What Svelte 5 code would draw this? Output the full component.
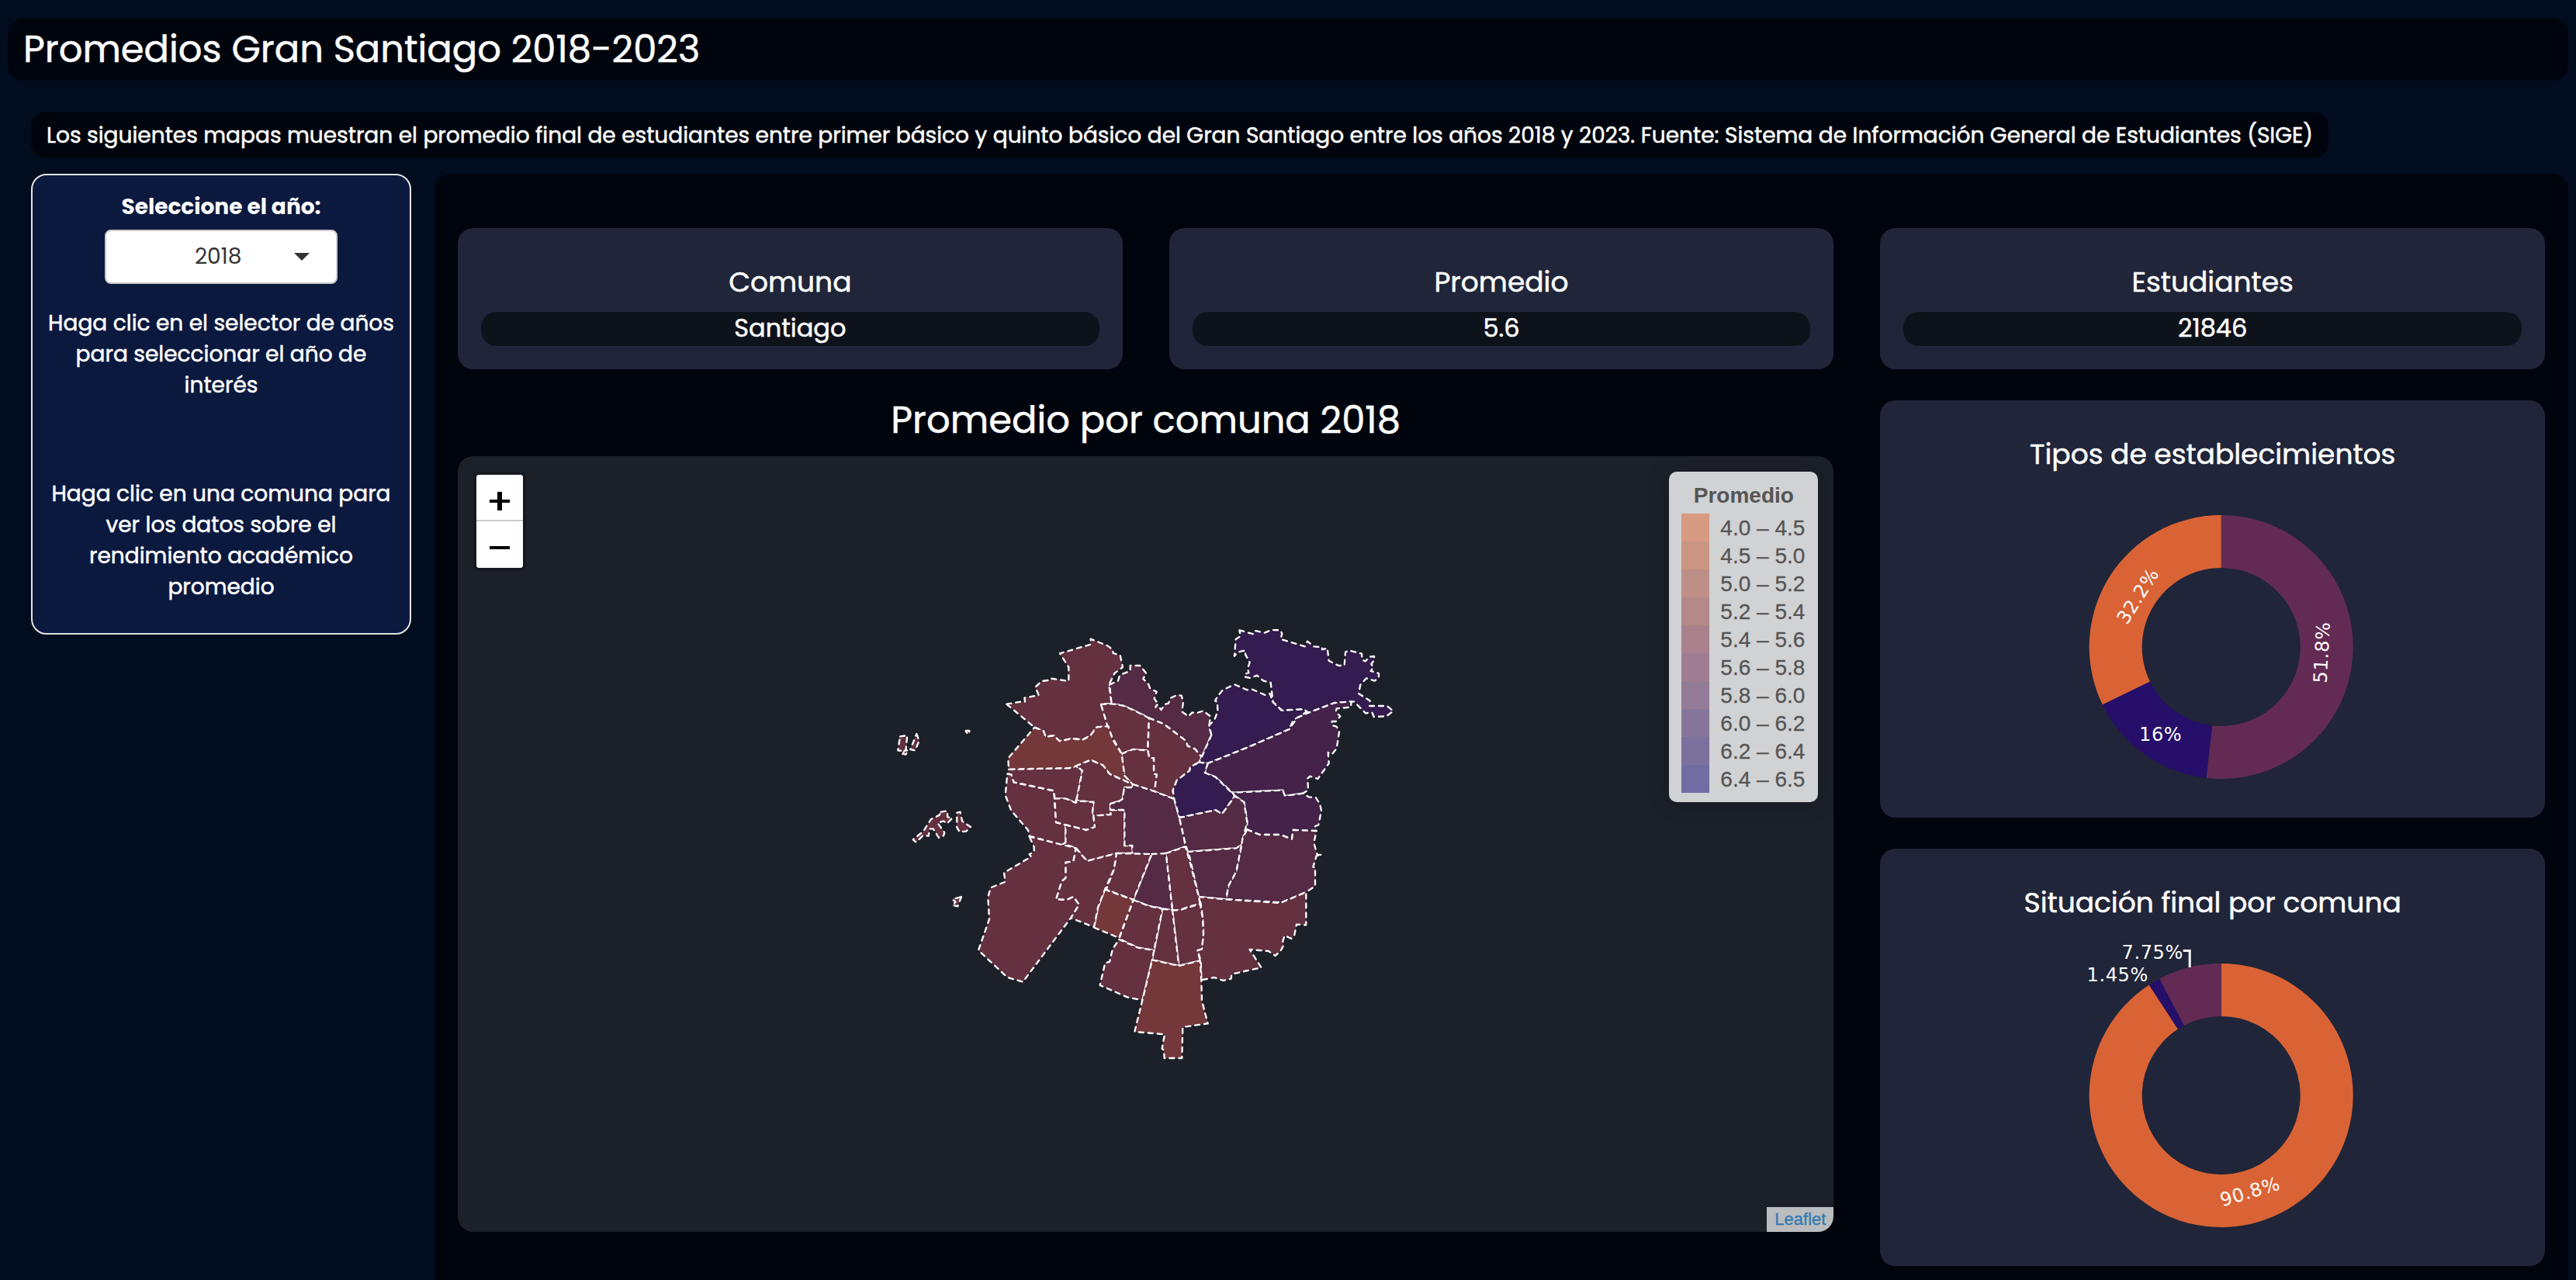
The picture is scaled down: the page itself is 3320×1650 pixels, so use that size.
<script>
  const A = '#65303f', B = '#74383b', C = '#552a45', D = '#44224a', E = '#341b50';

  // Each commune: fill, horizontal shift, vertical shift, outline points
  const communes = [
    [A, 0, 0, '472,383 525,374 543,374 541,359 596,348 583,317 608,294 640,290 644,284 712,294 712,240 678,187 797,152 797,131 862,157 882,172 884,186 911,194 921,240 889,264 868,308 878,381 837,383 862,463 862,470 820,472 795,506 765,521 725,516 677,526 655,505 622,509 615,487 580,473'],
    [C, 780, 0, '90,308 123,292 130,270 170,255 170,234 208,234 232,264 220,285 240,305 247,323 272,335 263,362 275,378 268,395 275,385 290,405 303,384 318,380 325,360 350,348 368,350 375,375 370,412 395,430 410,415 425,418 452,409 480,430 475,470 484,502 446,588 420,556 392,545 385,525 300,460 243,437 180,405 140,388 98,382'],
    [A, 780, 0, '57,384 98,382 140,388 180,405 243,437 240,500 238,562 180,558 137,575 97,505 80,460'],
    [A, 780, 0, '243,437 300,460 385,525 392,545 420,556 446,588 436,608 402,626 400,640 350,678 335,717 340,750 262,720 272,655 261,653 261,592 243,590 238,562'],
    [A, 780, 0, '137,575 180,558 238,562 243,590 261,592 261,653 272,655 264,720 180,694 147,660 137,600'],
    [A, 0, 0, '475,653 490,655 500,685 655,718 663,840 700,850 700,918 675,935 675,925 560,893 555,870 490,795 467,735'],
    [A, 0, 0, '480,635 715,630 740,622 765,640 740,765 700,748 658,748 655,718 500,685 490,655 478,653'],
    [B, 0, 0, '580,473 615,487 622,509 655,505 677,526 725,516 765,521 795,506 820,472 865,468 882,520 917,575 928,660 960,694 870,653 845,620 797,599 745,622 715,630 480,635 478,592'],
    [A, 0, 0, '740,622 797,599 845,620 870,653 960,694 958,706 928,705 920,750 905,758 873,768 873,810 808,815 803,810 808,762 740,755 740,765 765,640'],
    [A, 0, 0, '658,748 700,748 740,765 745,757 808,762 803,810 808,815 813,858 780,870 663,840'],
    [A, 0, 0, '700,850 780,870 813,858 808,815 875,810 873,792 928,792 928,930 958,930 958,960 897,960 783,990 740,940 700,925'],
    [C, 780, 0, '183,694 262,720 340,750 360,822 380,910 382,934 308,960 290,965 184,962 184,972 140,970 140,960 178,960 178,930 148,930 148,792 93,792 93,768 125,760 140,750 147,705 178,705'],
    [E, 780, 0, '484,502 475,465 495,445 508,412 507,375 498,370 510,350 528,328 573,307 622,328 640,325 692,348 710,342 722,375 755,407 838,402 852,412 835,425 800,445 785,480 625,550 470,612 436,608 446,588'],
    [E, 780, 0, '592,97 645,112 652,99 690,107 715,96 750,97 757,110 752,132 845,160 855,140 880,160 912,163 912,172 932,166 938,215 975,234 998,234 1002,182 1015,175 1065,188 1067,213 1080,217 1093,200 1113,198 1113,213 1102,228 1110,240 1100,255 1131,264 1131,280 1115,293 1083,283 1060,308 1053,342 1097,370 1095,390 1163,390 1187,410 1160,430 1112,432 1105,415 1080,418 1035,373 960,378 860,416 840,402 757,407 722,375 713,300 685,293 660,272 635,282 615,278 613,266 628,262 624,245 632,222 615,190 615,175 585,182 573,197 578,132 597,120'],
    [D, 780, 0, '470,612 625,550 785,480 815,436 860,416 960,378 1025,373 1023,395 968,400 965,412 982,430 965,450 950,450 950,465 968,470 978,490 968,555 950,577 935,570 938,612 895,672 865,662 856,670 858,715 838,728 768,738 760,716 565,725 500,665 458,648'],
    [E, 780, 0, '436,608 470,612 458,648 500,665 575,738 525,808 500,793 360,822 340,750 335,717 350,678 400,640 402,626'],
    [D, 780, 0, '575,738 565,725 760,716 768,738 838,728 860,742 888,745 903,768 909,795 898,850 885,855 890,873 800,870 795,905 750,888 670,888 622,868 622,835 610,762'],
    [C, 780, 0, '360,822 500,793 525,808 575,738 610,762 622,840 605,905 600,928 580,940 392,954 380,910'],
    [C, 780, 0, '622,868 670,888 750,888 795,905 800,870 890,873 880,920 893,965 910,966 890,970 877,1013 885,1014 885,1087 850,1110 755,1150 540,1138 550,1085 580,1030 600,930 605,900'],
    [C, 780, 0, '392,954 580,940 600,928 580,1030 550,1085 540,1138 435,1128 400,975'],
    [A, 780, 810, '435,318 540,328 750,342 850,300 850,427 813,425 805,465 793,480 767,468 760,490 763,505 750,530 730,546 705,528 632,522 677,592 562,617 560,635 530,642 495,630 445,640 443,565 430,525 447,520 453,460 450,400 443,345'],
    [A, 780, 810, '308,150 383,124 400,180 435,318 440,345 400,355 360,370 333,370'],
    [C, 780, 810, '253,153 308,150 333,370 240,353 182,330'],
    [A, 780, 810, '117,150 253,153 182,330 77,290 107,212'],
    [A, 780, 810, '333,370 360,370 440,345 450,400 453,460 447,520 430,525 440,565 358,585'],
    [A, 780, 810, '295,365 333,370 358,585 255,562 262,525'],
    [A, 780, 810, '182,330 240,353 295,365 262,525 200,515 127,480'],
    [B, 780, 810, '72,290 182,330 127,477 30,437 45,360'],
    [A, 780, 810, '127,483 200,515 262,525 255,562 217,718 160,707 53,660 73,573 90,570 102,520'],
    [B, 780, 810, '255,562 358,585 440,565 445,640 447,720 470,808 373,822 370,942 302,942 300,912 293,905 303,850 187,840 217,718'],
    [A, 270, 810, '470,130 513,180 627,150 617,212 582,290 555,360 540,435 450,400 482,348 460,318 435,330 393,328 415,258 430,245 430,185 460,180'],
    [A, 270, 810, '290,85 410,115 470,130 460,180 430,185 430,245 415,258 393,328 435,330 460,318 482,348 450,400 265,647 205,630 93,525 135,405 130,320 140,283 197,260 192,225 297,163 290,153 308,145 308,125'],
    [A, 0, 0, '60,508 88,504 82,565 52,562'],
    [A, 0, 0, '124,498 134,525 118,562 100,558'],
    [A, 0, 0, '70,575 82,578 92,562 78,562'],
    [A, 0, 0, '314,486 328,486 328,498 318,494'],
    [A, 0, 0, '218,800 242,796 244,820 262,823 242,845 228,835 205,842 232,880 228,892 210,900 188,865 175,865 170,893 150,890 122,917 110,907 150,875 180,828 212,812'],
    [A, 0, 0, '280,803 293,800 300,835 333,858 315,875 290,877 280,860'],
    [A, 270, 810, '27,318 13,355 -8,350 5,338 -8,328']
  ];

  const legend = [
    ['#d79a82', '4.0 – 4.5'], ['#ca9683', '4.5 – 5.0'], ['#be8f87', '5.0 – 5.2'], ['#b48988', '5.2 – 5.4'],
    ['#a9828c', '5.4 – 5.6'], ['#9f7e93', '5.6 – 5.8'], ['#937a97', '5.8 – 6.0'], ['#87769b', '6.0 – 6.2'],
    ['#7c709e', '6.2 – 6.4'], ['#716ca2', '6.4 – 6.5']
  ];

  const stats = [['Comuna', 'Santiago'], ['Promedio', '5.6'], ['Estudiantes', '21846']];

  // Donut slice between two fractions of a turn, clockwise from the top
  function ring(from, to, r = 170, inner = 102) {
    const p = (t, q) => `${(q * Math.sin(t * 2 * Math.PI)).toFixed(2)} ${(-q * Math.cos(t * 2 * Math.PI)).toFixed(2)}`;
    const big = to - from > 0.5 ? 1 : 0;
    return `M${p(from, r)}A${r} ${r} 0 ${big} 1 ${p(to, r)}L${p(to, inner)}A${inner} ${inner} 0 ${big} 0 ${p(from, inner)}Z`;
  }
</script>

<div class="page">
  <header><h1>Promedios Gran Santiago 2018-2023</h1></header>
  <p class="intro">Los siguientes mapas muestran el promedio final de estudiantes entre primer básico y quinto básico del Gran Santiago entre los años 2018 y 2023. Fuente: Sistema de Información General de Estudiantes (SIGE)</p>

  <div class="body">
    <aside>
      <span class="label">Seleccione el año:</span>
      <div class="select">
        <span>2018</span>
        <svg class="caret" width="20" height="10" viewBox="0 0 20 10"><path d="M0 0H20L10 10Z" fill="#333" /></svg>
      </div>
      <p>Haga clic en el selector de años<br />para seleccionar el año de<br />interés</p>
      <p class="second">Haga clic en una comuna para<br />ver los datos sobre el<br />rendimiento académico<br />promedio</p>
    </aside>

    <main>
      {#each stats as [name, value]}
        <section class="stat">
          <h4>{name}</h4>
          <div class="value">{value}</div>
        </section>
      {/each}

      <section class="mapcol">
        <h2>Promedio por comuna 2018</h2>
        <div class="map">
          <svg class="shapes" viewBox="-1650 -576 5320 3000">
            {#each communes as [fill, dx, dy, points]}
              <polygon {fill} {points} transform="translate({dx} {dy})" />
            {/each}
          </svg>
          <div class="zoom">
            <button aria-label="Acercar"><svg width="26" height="24" viewBox="0 0 26 24"><path d="M0 10H26V14H0ZM10 0H16V24H10Z" /></svg></button>
            <button aria-label="Alejar"><svg width="26" height="24" viewBox="0 0 26 24"><path d="M0 10H26V14H0Z" /></svg></button>
          </div>
          <div class="legend">
            <strong>Promedio</strong>
            {#each legend as [color, range]}
              <div class="row"><i style="background:{color}"></i><span>{range}</span></div>
            {/each}
          </div>
          <div class="credit">Leaflet</div>
        </div>
      </section>

      <div class="charts">
        <section class="chart">
          <h4>Tipos de establecimientos</h4>
          <svg viewBox="2423.33 626 856.67 428">
            <g transform="translate(2863 834)">
              <path d={ring(0, 0.518)} fill="#632b53" />
              <path d={ring(0.518, 0.678)} fill="#260f6a" />
              <path d={ring(0.678, 1)} fill="#da6335" />
            </g>
            <text transform="translate(2992 841) rotate(-86.8)" y="9">51.8%</text>
            <text x="2785" y="955">16%</text>
            <text transform="translate(2755 768) rotate(-58)" y="9">32.2%</text>
          </svg>
        </section>
        <section class="chart">
          <h4>Situación final por comuna</h4>
          <svg viewBox="2423.33 1204 856.67 428">
            <g transform="translate(2863 1412)">
              <path d={ring(0, 0.908)} fill="#da6335" />
              <path d={ring(0.908, 0.9225)} fill="#260f6a" />
              <path d={ring(0.9225, 1)} fill="#632b53" />
            </g>
            <path class="leader" d="M2814 1225.5H2822.5V1247" />
            <text x="2774.5" y="1236">7.75%</text>
            <text x="2729.5" y="1265">1.45%</text>
            <text transform="translate(2900 1535.5) rotate(-16.6)" y="9">90.8%</text>
          </svg>
        </section>
      </div>
    </main>
  </div>
</div>

<style>
  :global(body) { background: #010c1f; overflow: hidden; }
  .page {
    box-sizing: border-box;
    height: 1650px;
    overflow: hidden;
    padding: 24px 10px 0;
    background: #010c1f;
    color: #fff;
    font-family: Poppins, Inter, sans-serif;
    font-size: 28px;
    line-height: 40px;
    -webkit-text-stroke: 0.5px currentColor;
    display: flex;
    flex-direction: column;
  }
  h1, h2, h4, p { margin: 0; font-weight: 400; }
  header { flex: none; height: 80px; border-radius: 20px; background: #00050d; padding-left: 20px; }
  h1, h2 { font-size: 48px; line-height: 80px; }
  h1 { white-space: nowrap; }
  .intro {
    flex: none;
    align-self: flex-start;
    box-sizing: border-box;
    width: 2961px;
    height: 60px;
    margin: 40px 0 20px 30px;
    padding: 11px 20px 9px;
    border-radius: 20px;
    background: #00050d;
    white-space: nowrap;
  }
  .body { flex: none; display: flex; align-items: flex-start; padding-left: 30px; gap: 30px; }
  aside {
    box-sizing: border-box;
    flex: none;
    width: 490px;
    height: 594px;
    border: 2px solid #e3e3e3;
    border-radius: 20px;
    background: #0b193f;
    padding-top: 21px;
    text-align: center;
    display: flex;
    flex-direction: column;
    align-items: center;
    white-space: nowrap;
  }
  .label { font-weight: 700; -webkit-text-stroke: 0; }
  .select {
    box-sizing: border-box;
    width: 300px;
    height: 70px;
    margin: 9px 0 31px;
    border: 2px solid #ccc;
    border-radius: 8px;
    background: #fff;
    color: #333;
    -webkit-text-stroke: 0;
    display: flex;
    align-items: center;
    padding: 0 34px 0 114px;
    justify-content: space-between;
  }
  .second { margin-top: 100px; }
  main {
    box-sizing: border-box;
    flex: 1;
    height: 1460px;
    padding: 70px 30px 0;
    border-radius: 20px;
    background: #00050d;
    display: grid;
    grid-template-columns: repeat(3, 1fr);
    grid-template-rows: 182px auto;
    column-gap: 60px;
    align-content: start;
  }
  .stat, .chart { border-radius: 20px; background: #202539; text-align: center; }
  .stat { box-sizing: border-box; padding: 50px 30px 0; }
  h4 { font-size: 36px; line-height: 40px; }
  .value { height: 44px; margin-top: 18px; border-radius: 20px; background: #0e131b; font-size: 32px; line-height: 41px; }
  .mapcol { grid-column: span 2; padding-top: 40px; }
  h2 { text-align: center; line-height: 52px; margin-bottom: 20px; }
  .map {
    position: relative;
    height: 1000px;
    border-radius: 20px;
    overflow: hidden;
    background: #1c2028;
    font-family: "Liberation Sans", Arial, sans-serif;
    -webkit-text-stroke: 0.3px currentColor;
  }
  .shapes { display: block; width: 100%; height: 1000px; }
  polygon { stroke: #fff; stroke-width: 7; stroke-dasharray: 18 18; stroke-linecap: round; stroke-linejoin: round; }
  .zoom {
    position: absolute; left: 20px; top: 20px; width: 60px;
    border: 4px solid rgba(0, 0, 0, 0.2); border-radius: 8px; background: #fff; background-clip: padding-box; overflow: hidden;
  }
  .zoom button { box-sizing: border-box; width: 60px; height: 60px; padding: 6px 0 0; border: 0; background: #fff; display: flex; align-items: center; justify-content: center; }
  .zoom button:first-child { border-bottom: 2px solid #ccc; padding-top: 10px; }
  .zoom button:last-child { padding-top: 8px; }
  .legend {
    box-sizing: border-box;
    position: absolute; right: 20px; top: 20px; width: 192px; height: 426px;
    padding: 12px 16px; border-radius: 10px; background: rgba(255, 255, 255, 0.8);
    box-shadow: 0 0 30px rgba(0, 0, 0, 0.2); color: #555; line-height: 37px;
  }
  .legend strong { display: block; text-align: center; line-height: 37px; margin-bottom: 5px; -webkit-text-stroke: 0; }
  .row { display: flex; height: 36px; }
  .row i { width: 36px; height: 36px; margin-right: 14px; }
  .row span { white-space: nowrap; }
  .credit {
    position: absolute; right: 0; bottom: 0; box-sizing: border-box; width: 86px; height: 32px;
    padding-left: 10px; background: rgba(255, 255, 255, 0.7); color: #337ab0; font-size: 22px; line-height: 32px;
  }
  .charts { margin-top: 40px; display: flex; flex-direction: column; gap: 40px; }
  .chart { height: 538px; display: flex; flex-direction: column; }
  .chart h4 { padding: 50px 0 20px; }
  .chart svg { display: block; width: 100%; height: 428px; }
  .chart text { font: 24px "DejaVu Sans", Verdana, sans-serif; fill: #fff; text-anchor: middle; letter-spacing: 0.6px; -webkit-text-stroke: 0.6px #fff; }
  .leader { fill: none; stroke: #fff; stroke-width: 3; }
</style>
